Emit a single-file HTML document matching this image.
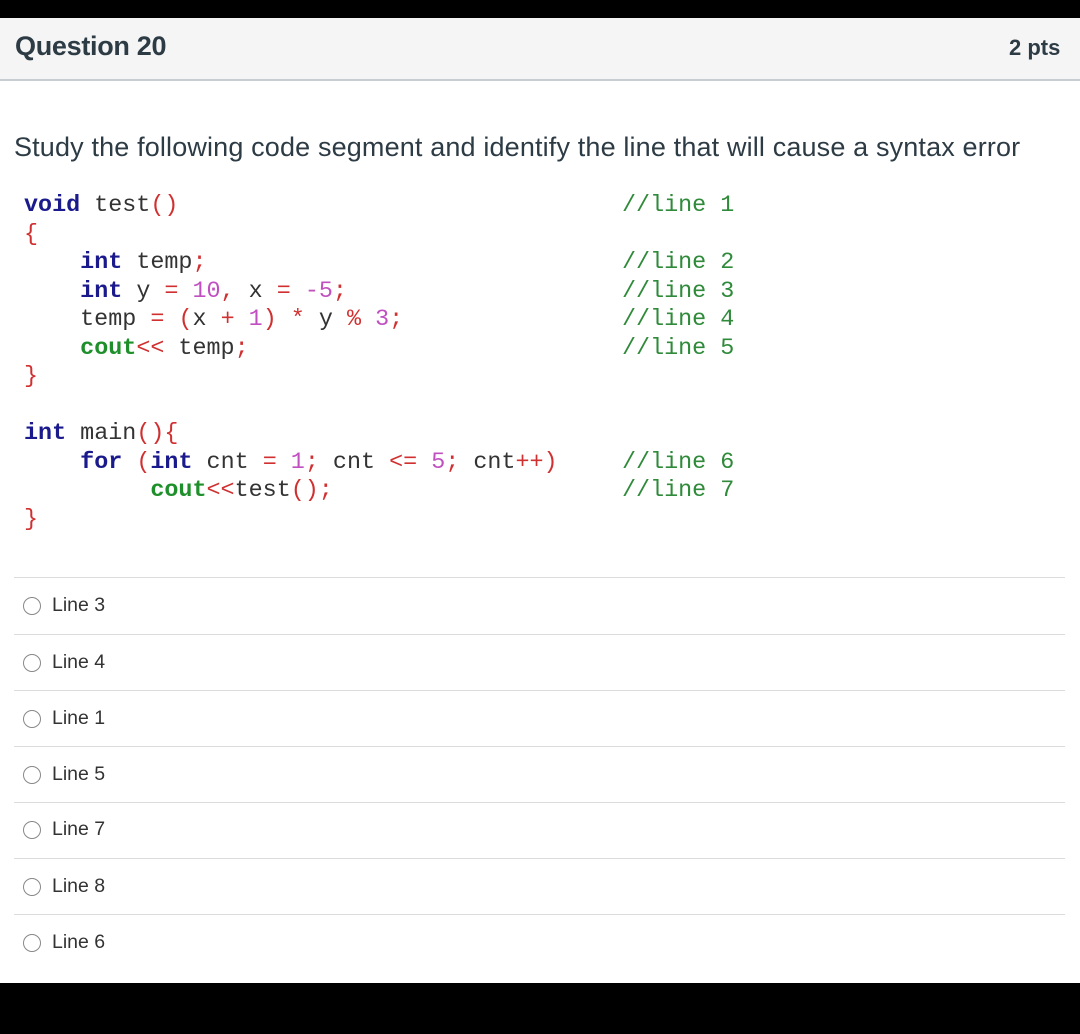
<!DOCTYPE html>
<html><head><meta charset="utf-8"><style>
*{margin:0;padding:0;box-sizing:border-box}
body{width:1080px;height:1034px;background:#fff;position:relative;overflow:hidden;font-family:"Liberation Sans",sans-serif;color:#2d3b45}
.abs{position:absolute}
.hdr{left:0;top:18px;width:1080px;height:63px;background:#f5f5f5;border-bottom:2px solid #c7cdd1}
.q{color:#2d3b45;white-space:nowrap}
.code{font-family:"Liberation Mono",monospace;font-size:23.4px;white-space:pre;line-height:28.5px;color:#333}
.k{color:#1a1a8c;font-weight:bold}
.g{color:#1e8f2a;font-weight:bold}
.r{color:#d03030}
.m{color:#c050c0}
.c{color:#2f8a3a}
.sep{left:14px;width:1051px;height:1px;background:#dcdcdc}
.opt{left:23px;width:18px;height:18px;border:1.5px solid #888;border-radius:50%}
.lab{left:52px;font-size:19.5px;color:#333}
</style></head><body>
<div class="abs" style="left:0;top:0;width:1080px;height:18px;background:#000"></div>
<div class="abs hdr"></div>
<div class="abs q" style="left:15px;top:31px;font-size:27px;font-weight:bold;letter-spacing:-0.3px">Question 20</div>
<div class="abs q" style="left:1009px;top:35px;font-size:22px;font-weight:bold">2 pts</div>
<div class="abs q" style="left:14px;top:132px;font-size:27px;letter-spacing:0.15px">Study the following code segment and identify the line that will cause a syntax error</div>
<div class="abs code" style="left:24px;top:192px"><span class="k">void</span> test<span class="r">()</span>
<span class="r">{</span>
    <span class="k">int</span> temp<span class="r">;</span>
    <span class="k">int</span> y <span class="r">=</span> <span class="m">10</span><span class="r">,</span> x <span class="r">=</span> <span class="m">-5</span><span class="r">;</span>
    temp <span class="r">=</span> <span class="r">(</span>x <span class="r">+</span> <span class="m">1</span><span class="r">)</span> <span class="r">*</span> y <span class="r">%</span> <span class="m">3</span><span class="r">;</span>
    <span class="g">cout</span><span class="r">&lt;&lt;</span> temp<span class="r">;</span>
<span class="r">}</span>

<span class="k">int</span> main<span class="r">(){</span>
    <span class="k">for</span> <span class="r">(</span><span class="k">int</span> cnt <span class="r">=</span> <span class="m">1</span><span class="r">;</span> cnt <span class="r">&lt;=</span> <span class="m">5</span><span class="r">;</span> cnt<span class="r">++)</span>
         <span class="g">cout</span><span class="r">&lt;&lt;</span>test<span class="r">();</span>
<span class="r">}</span></div>
<div class="abs code c" style="left:622px;top:192px">//line 1

//line 2
//line 3
//line 4
//line 5



//line 6
//line 7</div>

<div class="abs sep" style="top:577px"></div>
<div class="abs opt" style="top:597px"></div><div class="abs lab" style="top:594px">Line 3</div>
<div class="abs sep" style="top:634px"></div>
<div class="abs opt" style="top:654px"></div><div class="abs lab" style="top:651px">Line 4</div>
<div class="abs sep" style="top:690px"></div>
<div class="abs opt" style="top:710px"></div><div class="abs lab" style="top:707px">Line 1</div>
<div class="abs sep" style="top:746px"></div>
<div class="abs opt" style="top:766px"></div><div class="abs lab" style="top:763px">Line 5</div>
<div class="abs sep" style="top:802px"></div>
<div class="abs opt" style="top:821px"></div><div class="abs lab" style="top:818px">Line 7</div>
<div class="abs sep" style="top:858px"></div>
<div class="abs opt" style="top:878px"></div><div class="abs lab" style="top:875px">Line 8</div>
<div class="abs sep" style="top:914px"></div>
<div class="abs opt" style="top:934px"></div><div class="abs lab" style="top:931px">Line 6</div>
<div class="abs" style="left:0;top:983px;width:1080px;height:51px;background:#000"></div>
</body></html>
